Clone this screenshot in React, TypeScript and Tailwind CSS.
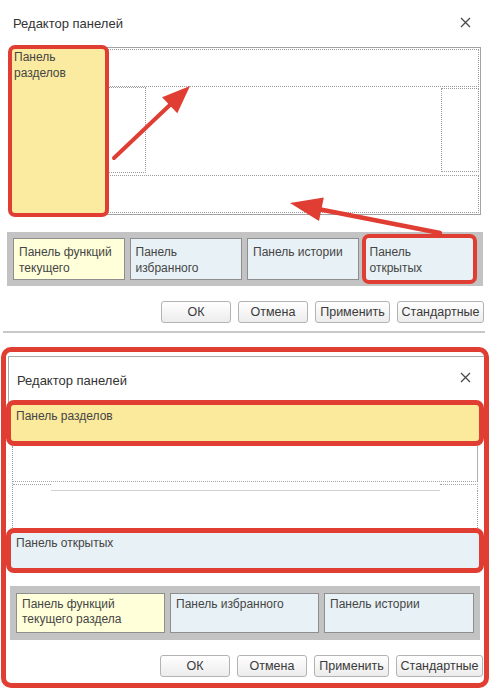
import React from 'react';

const RED = 'border-[#e03e33]';

const CloseIcon = () => (
  <svg width="11" height="11" viewBox="0 0 11 11" className="block">
    <path d="M1 1 L10 10 M10 1 L1 10" stroke="#4a4a4a" strokeWidth="1.3" fill="none" />
  </svg>
);

const DialogButton = ({ label, width }: { label: string; width: string }) => (
  <button
    className={`${width} h-[22px] rounded-[3px] border border-[#b3b3b3] bg-gradient-to-b from-white to-[#ececec] text-[12.5px] text-[#3a3a3a] leading-none`}
  >
    {label}
  </button>
);

const ButtonRow = ({ className }: { className: string }) => (
  <div className={`flex justify-end gap-[7px] ${className}`}>
    <DialogButton label="ОК" width="w-[70px]" />
    <DialogButton label="Отмена" width="w-[70px]" />
    <DialogButton label="Применить" width="w-[75px]" />
    <DialogButton label="Стандартные" width="w-[87px]" />
  </div>
);

// Red callout arrows drawn over the first editor
const Arrows = () => (
  <svg className="absolute left-0 top-0 pointer-events-none" width="490" height="330">
    <line x1="114" y1="158" x2="172" y2="103" stroke="#e03e33" strokeWidth="4" strokeLinecap="round" />
    <polygon points="190,86 177.3,113.3 162.1,97.3" fill="#e03e33" />
    <line x1="440" y1="233" x2="318" y2="209" stroke="#e03e33" strokeWidth="4.5" strokeLinecap="round" />
    <polygon points="290,203 323.8,197.5 319,221.1" fill="#e03e33" />
  </svg>
);

const OldEditor = () => (
  <div className="relative h-[331px]">
    <div className="flex justify-between pl-[13px] pr-[19px] pt-[16px] h-[45px]">
      <span className="text-[13px] leading-[16px] text-[#333]">Редактор панелей</span>
      <div className="pt-[1px]">
        <CloseIcon />
      </div>
    </div>

    {/* panel layout preview */}
    <div className="ml-[8px] w-[473px] h-[172px] flex">
      <div className={`w-[101px] h-full border-[4px] ${RED} rounded-[7px] bg-[#fbeba0] pl-[2px] text-[12px] leading-[16px] text-[#454545] relative z-10`}>
        Панель
        <br />
        разделов
      </div>
      <div className="flex-1 my-[2px] -ml-[2px] border-y border-r border-[#a3a3a3] p-px flex flex-col">
        <div className="h-[38px] border border-dotted border-[#9c9c9c]" />
        <div className="h-[88px] flex">
          <div className="w-[38px] border border-dotted border-[#9c9c9c] mb-[1px]" />
          <div className="flex-1" />
          <div className="w-[38px] border border-dotted border-[#9c9c9c] mt-[1px] mb-[2px]" />
        </div>
        <div className="h-[38px] mt-[1px] border border-dotted border-[#9c9c9c]" />
      </div>
    </div>

    {/* available panels */}
    <div className="mt-[15px] ml-[7px] w-[476px] h-[54px] bg-[#c3c3c3] flex items-center px-[6px] gap-[5px]">
      <div className="w-[112px] h-[42px] border border-[#8e8e8e] bg-[#ffffd9] pl-[5px] pt-[5px] text-[12px] leading-[16px] text-[#454545]">
        Панель функций
        <br />
        текущего
      </div>
      <div className="w-[113px] h-[42px] border border-[#8e8e8e] bg-[#e8f1f5] pl-[5px] pt-[5px] text-[12px] leading-[16px] text-[#454545]">
        Панель
        <br />
        избранного
      </div>
      <div className="w-[112px] h-[42px] border border-[#8e8e8e] bg-[#e8f1f5] pl-[5px] pt-[5px] text-[12px] leading-[16px] text-[#454545]">
        Панель истории
      </div>
      <div className={`-ml-[2px] w-[116px] h-[50px] border-[4px] ${RED} rounded-[7px] bg-[#e8f1f5] pl-[4px] pt-[6px] text-[12px] leading-[16px] text-[#454545]`}>
        Панель
        <br />
        открытых
      </div>
    </div>

    <ButtonRow className="mt-[15px] pr-[6px]" />
    <Arrows />
  </div>
);

const NewEditor = () => (
  <div className={`mx-[1px] w-[488px] h-[341px] border-[5px] ${RED} rounded-[10px] overflow-hidden`}>
    <div className="h-[48px] mt-[4px] ml-[2px] border-t border-l border-[#a8a8a8] flex justify-between pl-[8px] pr-[13px] pt-[16px]">
      <span className="text-[13px] leading-[16px] text-[#333]">Редактор панелей</span>
      <div className="-mt-[1px]">
        <CloseIcon />
      </div>
    </div>

    <div className={`-mt-[4px] h-[46px] border-[5px] ${RED} rounded-[8px] bg-[#fbe99c] pl-[5px] pt-[3px] text-[12px] leading-[16px] text-[#454545]`}>
      Панель разделов
    </div>

    {/* empty area between the two bars */}
    <div className="h-[82px] mx-[6px] border-l border-dotted border-[#9c9c9c] flex flex-col">
      <div className="h-[35px] border-r border-[#b0b0b0]" />
      <div className="h-[10px] flex border-t border-dotted border-[#a6a6a6]">
        <div className="w-[38px] mt-[2px] border-t border-dotted border-[#a6a6a6]" />
        <div className="flex-1 border-b border-[#d0d0d0]" />
        <div className="w-[38px] mt-[2px] border-t border-r border-dotted border-[#a6a6a6]" />
      </div>
      <div className="flex-1 border-r border-dotted border-[#9c9c9c]" />
    </div>

    <div className={`h-[45px] border-[5px] ${RED} rounded-[8px] bg-[#e8f1f5] pl-[5px] pt-[2px] text-[12px] leading-[16px] text-[#454545]`}>
      Панель открытых
    </div>

    <div className="mt-[13px] ml-[4px] w-[470px] h-[54px] bg-[#c3c3c3] flex items-center px-[6px] gap-[5px]">
      <div className="w-[149px] h-[40px] border border-[#8e8e8e] bg-[#ffffd9] pl-[5px] pt-[3px] text-[12px] leading-[15px] text-[#454545]">
        Панель функций
        <br />
        текущего раздела
      </div>
      <div className="w-[149px] h-[40px] border border-[#8e8e8e] bg-[#e8f1f5] pl-[5px] pt-[3px] text-[12px] leading-[15px] text-[#454545]">
        Панель избранного
      </div>
      <div className="w-[150px] h-[40px] border border-[#8e8e8e] bg-[#e8f1f5] pl-[5px] pt-[3px] text-[12px] leading-[15px] text-[#454545]">
        Панель истории
      </div>
    </div>

    <ButtonRow className="mt-[15px] pr-[1px]" />
  </div>
);

export default function App() {
  return (
    <div className="w-[490px] h-[688px] bg-white overflow-hidden font-['Liberation_Sans',Arial,sans-serif]">
      <OldEditor />
      <div className="ml-[3px] w-[482px] h-[2px] bg-[#c9c9c9]" />
      <div className="mt-[14px]">
        <NewEditor />
      </div>
    </div>
  );
}
